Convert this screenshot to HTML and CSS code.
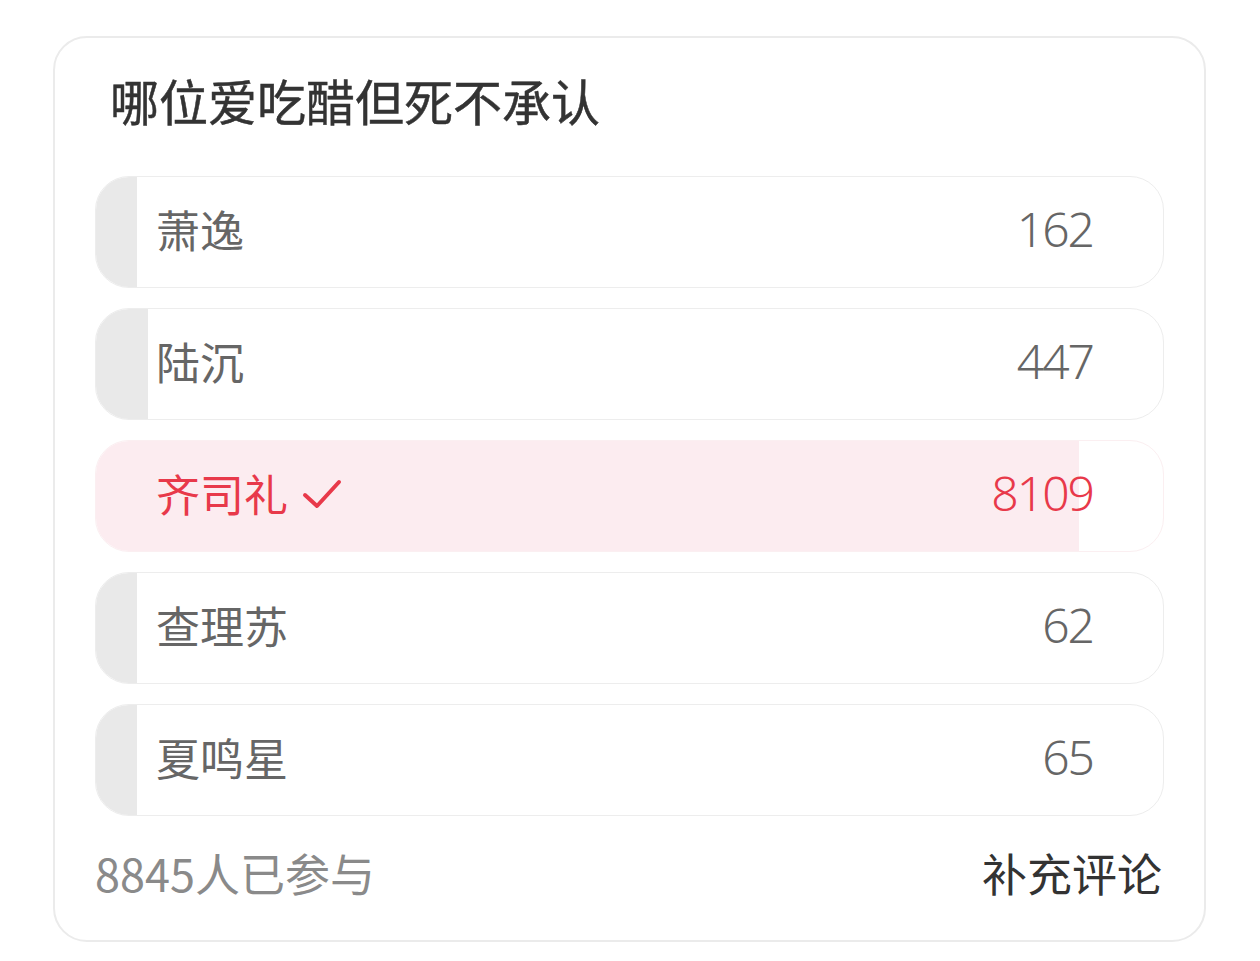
FILE: index.html
```html
<!DOCTYPE html>
<html lang="zh-CN">
<head>
    <meta charset="UTF-8">
    <meta name="viewport" content="width=device-width, initial-scale=1.0">
    <title>投票</title>
    <link rel="stylesheet" href="styles.css">
</head>
<body>
    <div class="card">
        <h2 class="title">哪位爱吃醋但死不承认</h2>
        <div class="options">
            <div class="option">
                <div class="fill" style="width: 3.8%;"></div>
                <span class="name">萧逸</span>
                <span class="count">162</span>
            </div>
            <div class="option">
                <div class="fill" style="width: 4.9%;"></div>
                <span class="name">陆沉</span>
                <span class="count">447</span>
            </div>
            <div class="option selected">
                <div class="fill" style="width: 92.1%;"></div>
                <span class="name">齐司礼
                    <svg class="check" width="40" height="32" viewBox="0 0 40 32">
                        <polyline points="3,16 15,27 37,3" fill="none" stroke="#e8394a" stroke-width="4" stroke-linecap="round" stroke-linejoin="round"/>
                    </svg>
                </span>
                <span class="count">8109</span>
            </div>
            <div class="option">
                <div class="fill" style="width: 3.8%;"></div>
                <span class="name">查理苏</span>
                <span class="count">62</span>
            </div>
            <div class="option">
                <div class="fill" style="width: 3.8%;"></div>
                <span class="name">夏鸣星</span>
                <span class="count">65</span>
            </div>
        </div>
        <div class="footer">
            <span class="joined">8845人已参与</span>
            <span class="comment">补充评论</span>
        </div>
    </div>
</body>
</html>
```

FILE: styles.css
```css
body {
    margin: 0;
    background: #fff;
    font-family: "Noto Sans CJK SC", "Noto Sans", sans-serif;
}
.card {
    margin: 36px 54px 0 53px;
    height: 906px;
    box-sizing: border-box;
    border: 2px solid #ebebeb;
    border-radius: 34px;
    padding: 0 40px;
}
.title {
    margin: 0;
    padding: 30px 0 0 15px;
    height: 101px;
    box-sizing: border-box;
    font-size: 49px;
    line-height: 64px;
    font-weight: normal;
    color: #333;
    -webkit-text-stroke: 0.5px #333;
}
.options {
    margin-top: 37px;
    display: flex;
    flex-direction: column;
    gap: 20px;
}
.option {
    position: relative;
    height: 112px;
    box-sizing: border-box;
    border: 1px solid #ededed;
    border-radius: 34px;
    overflow: hidden;
    display: flex;
    align-items: center;
    justify-content: space-between;
    padding: 0 70px 6px 60px;
}
.fill {
    position: absolute;
    left: 0;
    top: 0;
    bottom: 0;
    background: #e9e9e9;
}
.name, .count {
    position: relative;
    color: #666;
}
.name {
    font-size: 44px;
    display: flex;
    align-items: center;
    gap: 14px;
}
.count {
    font-family: "Noto Sans", sans-serif;
    font-size: 48px;
    font-weight: 300;
    letter-spacing: -2px;
    margin-top: -1px;
}
.selected {
    border-color: #fbeff1;
}
.selected .fill {
    background: #fcecf0;
}
.selected .name, .selected .count {
    color: #e8394a;
}
.check {
    margin-top: 4px;
}
.footer {
    display: flex;
    justify-content: space-between;
    align-items: center;
    margin-top: 24px;
    padding-right: 2px;
    font-size: 45px;
}
.joined {
    color: #8a8a8a;
}
.comment {
    color: #333;
}
```
